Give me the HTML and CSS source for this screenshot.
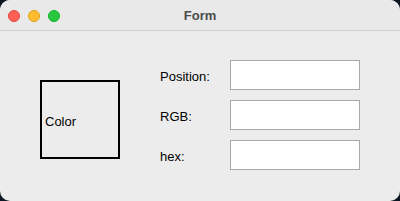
FILE: index.html
```html
<!DOCTYPE html>
<html lang="en">
<head>
    <meta charset="UTF-8">
    <title>Form</title>
    <link rel="stylesheet" href="styles.css">
</head>
<body>
<div class="window">
    <div class="titlebar">
        <div class="lights">
            <span class="light red"></span>
            <span class="light yellow"></span>
            <span class="light green"></span>
        </div>
        <div class="title">Form</div>
    </div>
    <div class="content">
        <div class="swatch">Color</div>
        <div class="fields">
            <label class="label">Position:</label>
            <input class="field" type="text">
            <label class="label">RGB:</label>
            <input class="field" type="text">
            <label class="label">hex:</label>
            <input class="field" type="text">
        </div>
    </div>
</div>
</body>
</html>
```

FILE: styles.css
```css
html, body {
    margin: 0;
    padding: 0;
    background: #0c1622;
}

.window {
    width: 400px;
    height: 201px;
    background: #ececec;
    border-radius: 10px;
    overflow: hidden;
    font-family: "Liberation Sans", Arial, sans-serif;
    color: #000;
}

.titlebar {
    position: relative;
    height: 30px;
    border-bottom: 1px solid #cdcdcd;
    background: #e9e9e9;
    display: flex;
    align-items: center;
    justify-content: center;
}

.lights {
    position: absolute;
    left: 8px;
    top: 10px;
    display: flex;
    gap: 8px;
}

.light {
    width: 12px;
    height: 12px;
    border-radius: 50%;
    box-sizing: border-box;
}

.red {
    background: #fe5f57;
    border: 1px solid #e2463f;
}

.yellow {
    background: #febc2e;
    border: 1px solid #e1a116;
}

.green {
    background: #28c840;
    border: 1px solid #14ae2b;
}

.title {
    font-size: 13px;
    font-weight: bold;
    color: #4b4b4b;
    padding-top: 1px;
}

.content {
    display: flex;
    padding: 29px 0 0 40px;
}

.swatch {
    width: 80px;
    height: 79px;
    margin-top: 20px;
    margin-right: 40px;
    box-sizing: border-box;
    border: 2px solid #000;
    display: flex;
    align-items: center;
    padding: 4px 0 0 3px;
    font-size: 13px;
}

.fields {
    display: grid;
    grid-template-columns: 70px 130px;
    grid-auto-rows: 30px;
    row-gap: 10px;
    align-items: center;
}

.label {
    font-size: 13px;
    padding-top: 2px;
}

.field {
    width: 130px;
    height: 30px;
    box-sizing: border-box;
    margin: 0;
    border: 1px solid #a9a9a9;
    background: #fff;
    outline: none;
}
```
